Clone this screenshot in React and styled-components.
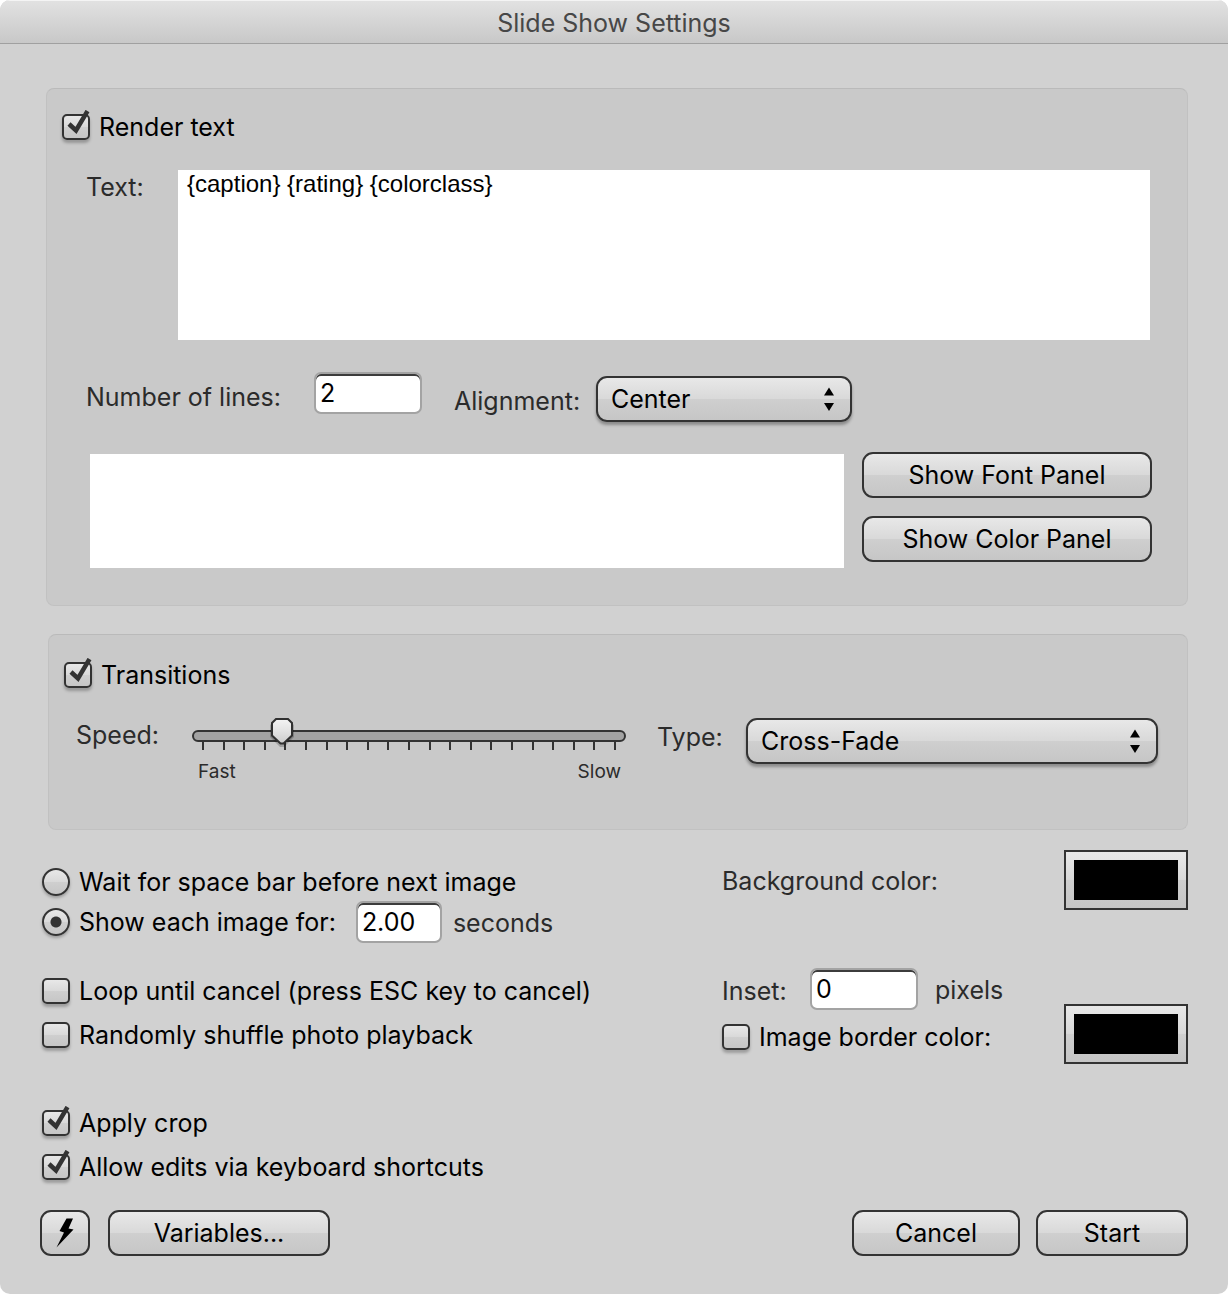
import { useState } from 'react';
import styled, { createGlobalStyle } from 'styled-components';

const GlobalStyle = createGlobalStyle`
    * {
        box-sizing: border-box;
    }
    body {
        margin: 0;
        background: #fff;
    }
    body, button, input, select {
        font-family: Inter, 'Liberation Sans', sans-serif;
        font-size: 25px;
        line-height: 32px;
        color: #000;
    }
`;

const glossy = 'linear-gradient(#e8e8e8 0%, #d9d9d9 49%, #cfcfcf 50%, #c6c6c6 100%)';

// pointed slider handle
const thumb = `url("data:image/svg+xml,%3Csvg xmlns='http://www.w3.org/2000/svg' width='26' height='32'%3E%3Cdefs%3E%3ClinearGradient id='g' x2='0' y2='1'%3E%3Cstop stop-color='%23f4f4f4'/%3E%3Cstop offset='.5' stop-color='%23e2e2e2'/%3E%3Cstop offset='1' stop-color='%23cccccc'/%3E%3C/linearGradient%3E%3C/defs%3E%3Cpath d='M5 3h16l4 4v12l-10 10h-4L1 19V7z' fill='%23000' opacity='.2'/%3E%3Cpath d='M7 1h12l4 4v12.500l-8.500 8h-3L3 17.500V5z' fill='url(%23g)' stroke='%23303030' stroke-width='2'/%3E%3C/svg%3E")`;

const Window = styled.form`
    display: flex;
    flex-direction: column;
    min-height: 100vh;
    background: #d1d1d1;
    border-radius: 10px;
    overflow: hidden;
`;

const TitleBar = styled.header`
    height: 44px;
    padding-top: 7px;
    text-align: center;
    color: #474747;
    background: linear-gradient(#e2e2e2, #c8c8c8);
    border-bottom: 1px solid #a0a0a0;
    box-shadow: inset 0 2px 0 -1px #f4f4f4;
`;

const Title = styled.h1`
    margin: 0;
    font-size: 25px;
    font-weight: 400;
    line-height: 32px;
`;

const Content = styled.main`
    display: flex;
    flex-direction: column;
    padding: 44px 40px 38px;
`;

const Panel = styled.section`
    margin-left: ${props => props.$indent}px;
    margin-bottom: ${props => props.$after}px;
    padding: ${props => props.$padding};
    background: #c9c9c9;
    border: 1px solid #c1c1c1;
    border-top-color: #bababa;
    border-radius: 8px;
`;

const Choice = styled.label`
    display: inline-flex;
    align-items: center;
    gap: 9px;
`;

const Mark = styled.span`
    position: relative;
    display: flex;
    flex: none;
    width: 28px;
`;

const Tick = styled.svg`
    display: none;
    position: absolute;
    left: 0;
    top: -4px;
    pointer-events: none;
`;

const CheckInput = styled.input`
    appearance: none;
    width: 28px;
    height: 26px;
    margin: 0;
    border: 2px solid #333;
    border-radius: 5px;
    background: ${glossy};
    box-shadow: 0 3px 3px rgba(0, 0, 0, 0.25);

    &:checked + ${Tick} {
        display: block;
    }
`;

const RadioInput = styled.input`
    appearance: none;
    width: 28px;
    height: 28px;
    margin: 0;
    border: 2px solid #333;
    border-radius: 50%;
    background: ${glossy};
    box-shadow: 0 2px 3px rgba(0, 0, 0, 0.25);

    &:checked {
        background: radial-gradient(circle, #333 5px, transparent 6px), ${glossy};
    }
`;

const FieldLabel = styled.label`
    color: #2b2b2b;
    white-space: nowrap;
    width: ${props => props.$width ? props.$width + 'px' : 'auto'};
    padding-top: ${props => props.$drop || 0}px;
`;

const Unit = styled.span`
    color: #2b2b2b;
    padding-top: 2px;
`;

const NumberInput = styled.input`
    width: ${props => props.$width}px;
    height: 42px;
    padding: 0 4px;
    border: 2px solid #a3a3a3;
    border-radius: 7px;
    background: #fff;
    box-shadow: inset 0 2px 0 #3c3c3c;
    outline: none;
`;

const TextRow = styled.div`
    display: flex;
    align-items: flex-start;
    margin-top: 27px;
    padding: 0 2px 0 24px;
`;

const CaptionText = styled.textarea`
    flex: 1;
    min-width: 0;
    height: 170px;
    padding: 0 9px;
    border: 0;
    resize: none;
    outline: none;
    background: #fff;
    color: #000;
    font: 24px/28px 'Liberation Sans', Arial, sans-serif;
`;

const LinesRow = styled.div`
    display: flex;
    align-items: flex-start;
    gap: 32px;
    margin-top: 32px;
    padding-left: 24px;
`;

const Field = styled.div`
    display: flex;
    align-items: center;
`;

const SelectWrap = styled.div`
    position: relative;
    flex: ${props => props.$grow || 'none'};
    width: ${props => props.$width ? props.$width + 'px' : 'auto'};
    min-width: 0;
    margin: 4px 0 2px;
`;

const SelectBox = styled.select`
    appearance: none;
    display: block;
    width: 100%;
    height: 46px;
    padding: 0 40px 0 13px;
    border: 2px solid #333;
    border-radius: 11px;
    background: ${glossy};
    box-shadow: 0 3px 3px rgba(0, 0, 0, 0.3);
`;

const Arrows = styled.svg`
    position: absolute;
    right: 18px;
    top: 11px;
    pointer-events: none;
`;

const PreviewRow = styled.div`
    display: flex;
    align-items: flex-end;
    gap: 18px;
    margin-top: 28px;
    padding-left: 28px;
`;

const Preview = styled.div`
    flex: 1;
    height: 114px;
    background: #fff;
`;

const ButtonStack = styled.div`
    display: grid;
    gap: 18px;
    width: 290px;
    padding-bottom: 6px;
`;

const PushButton = styled.button`
    display: flex;
    align-items: center;
    justify-content: center;
    width: ${props => props.$width ? props.$width + 'px' : '100%'};
    height: 46px;
    padding: 0;
    border: 2px solid #333;
    border-radius: 11px;
    background: ${glossy};
`;

const TransitionRow = styled.div`
    display: flex;
    align-items: flex-start;
    margin-top: 23px;
    padding-left: 12px;
`;

const Slider = styled.div`
    flex: 434;
    min-width: 0;
    padding-top: 6px;
    margin-right: 31px;
`;

const Range = styled.input`
    appearance: none;
    display: block;
    width: 100%;
    height: 32px;
    margin: 0;
    background: none;

    &::-webkit-slider-runnable-track {
        height: 12px;
        border: 2px solid #333;
        border-radius: 6px;
        background: #a3a3a3;
    }
    &::-webkit-slider-thumb {
        appearance: none;
        position: relative;
        width: 26px;
        height: 32px;
        margin-top: -14px;
        background: ${thumb} no-repeat;
    }
`;

const Ticks = styled.div`
    display: flex;
    justify-content: space-between;
    height: 8px;
    margin-top: -10px;
    padding: 0 10px;

    i {
        width: 2px;
        background: #333;
    }
`;

const Ends = styled.div`
    display: flex;
    justify-content: space-between;
    padding: 10px 5px 0 6px;
    font-size: 19px;
    line-height: 24px;
    color: #2b2b2b;
`;

const Options = styled.div`
    display: grid;
    grid-template-columns: minmax(0, 682fr) minmax(0, 466fr);
`;

const LeftColumn = styled.div`
    padding: 12px 0 0 2px;
`;

const OptionGroup = styled.div`
    margin-bottom: ${props => props.$after}px;
`;

const Option = styled.div`
    display: flex;
    align-items: center;
    height: ${props => props.$height}px;
    white-space: nowrap;
`;

const Timing = styled.div`
    display: flex;
    align-items: center;
    gap: 11px;
    margin-left: 20px;
`;

const ColorRow = styled.div`
    display: flex;
    align-items: center;
    justify-content: space-between;
    margin-bottom: 58px;
`;

const BorderBlock = styled.div`
    display: flex;
    align-items: flex-end;
    justify-content: space-between;
    height: 96px;
`;

const BorderFields = styled.div`
    display: flex;
    flex-direction: column;
    gap: 6px;
    align-self: flex-start;
    align-items: flex-start;
    white-space: nowrap;
`;

const Inset = styled.div`
    display: flex;
    align-items: center;
    gap: 17px;
`;

const ColorWell = styled.input`
    appearance: none;
    flex: none;
    width: 124px;
    height: 60px;
    padding: 8px;
    border: 2px solid #333;
    background: ${glossy};

    &::-webkit-color-swatch-wrapper {
        padding: 0;
    }
    &::-webkit-color-swatch {
        border: 0;
        border-radius: 0;
    }
`;

const Footer = styled.footer`
    display: flex;
    gap: 16px;
    margin-top: 21px;
`;

const FooterLeft = styled.div`
    display: flex;
    gap: 18px;
    margin-right: auto;
`;

function Check({ children, on }) {
    let [checked, setChecked] = useState(!!on);

    return (
        <Choice>
            <Mark>
                <CheckInput type="checkbox" checked={checked} onChange={e => setChecked(e.target.checked)} />
                <Tick width="30" height="28" viewBox="0 0 30 28" aria-hidden="true">
                    <path d="M7 14 L14 20.500 L25.500 1" fill="none" stroke="#333" strokeWidth="4.500" />
                </Tick>
            </Mark>
            {children}
        </Choice>
    )
}

function Radio({ children, ...rest }) {
    return (
        <Choice>
            <Mark>
                <RadioInput type="radio" name="advance" {...rest} />
            </Mark>
            {children}
        </Choice>
    )
}

function Popup({ id, options, ...rest }) {
    return (
        <SelectWrap {...rest}>
            <SelectBox id={id}>
                {options.map(name => <option key={name}>{name}</option>)}
            </SelectBox>
            <Arrows width="10" height="24" viewBox="0 0 10 24" aria-hidden="true">
                <path d="M5 0.500 L10 8.500 H0 Z M0 16 H10 L5 24 Z" fill="#000" />
            </Arrows>
        </SelectWrap>
    )
}

function App() {
    let [advance, setAdvance] = useState('timed');
    let [speed, setSpeed] = useState(37);

    return (
        <>
            <GlobalStyle />
            <Window onSubmit={e => e.preventDefault()}>
                <TitleBar>
                    <Title>Slide Show Settings</Title>
                </TitleBar>
                <Content>
                    <Panel $indent={6} $after={28} $padding="22px 35px 37px 15px">
                        <Option $height={32}><Check on>Render text</Check></Option>
                        <TextRow>
                            <FieldLabel htmlFor="caption" $width={92} $drop={1}>Text:</FieldLabel>
                            <CaptionText id="caption" defaultValue="{caption} {rating} {colorclass}" spellCheck={false} />
                        </TextRow>
                        <LinesRow>
                            <Field>
                                <FieldLabel htmlFor="lines" $width={228} $drop={8}>Number of lines:</FieldLabel>
                                <NumberInput id="lines" $width={108} defaultValue="2" />
                            </Field>
                            <Field>
                                <FieldLabel htmlFor="align" $width={142} $drop={6}>Alignment:</FieldLabel>
                                <Popup id="align" $width={256} options={['Center']} />
                            </Field>
                        </LinesRow>
                        <PreviewRow>
                            <Preview />
                            <ButtonStack>
                                <PushButton type="button">Show Font Panel</PushButton>
                                <PushButton type="button">Show Color Panel</PushButton>
                            </ButtonStack>
                        </PreviewRow>
                    </Panel>

                    <Panel $indent={8} $after={20} $padding="24px 29px 45px 15px">
                        <Option $height={32}><Check on>Transitions</Check></Option>
                        <TransitionRow>
                            <FieldLabel htmlFor="speed" $width={116} $drop={5}>Speed:</FieldLabel>
                            <Slider>
                                <Range id="speed" type="range" min="0" max="200" value={speed}
                                    onChange={e => setSpeed(e.target.value)} />
                                <Ticks>{[...Array(21)].map((_, i) => <i key={i} />)}</Ticks>
                                <Ends><span>Fast</span><span>Slow</span></Ends>
                            </Slider>
                            <FieldLabel htmlFor="type" $width={89} $drop={7}>Type:</FieldLabel>
                            <Popup id="type" $grow="412" options={['Cross-Fade']} />
                        </TransitionRow>
                    </Panel>

                    <Options>
                        <LeftColumn>
                            <OptionGroup $after={27}>
                                <Option $height={40}>
                                    <Radio checked={advance === 'space'} onChange={() => setAdvance('space')}>
                                        Wait for space bar before next image
                                    </Radio>
                                </Option>
                                <Option $height={40}>
                                    <Radio checked={advance === 'timed'} onChange={() => setAdvance('timed')}>
                                        Show each image for:
                                    </Radio>
                                    <Timing>
                                        <NumberInput aria-label="Seconds" $width={86} defaultValue="2.00" />
                                        <Unit>seconds</Unit>
                                    </Timing>
                                </Option>
                            </OptionGroup>
                            <OptionGroup $after={44}>
                                <Option $height={44}><Check>Loop until cancel (press ESC key to cancel)</Check></Option>
                                <Option $height={44}><Check>Randomly shuffle photo playback</Check></Option>
                            </OptionGroup>
                            <OptionGroup $after={0}>
                                <Option $height={44}><Check on>Apply crop</Check></Option>
                                <Option $height={44}><Check on>Allow edits via keyboard shortcuts</Check></Option>
                            </OptionGroup>
                        </LeftColumn>
                        <div>
                            <ColorRow>
                                <FieldLabel htmlFor="background" $drop={2}>Background color:</FieldLabel>
                                <ColorWell id="background" type="color" defaultValue="#000000" />
                            </ColorRow>
                            <BorderBlock>
                                <BorderFields>
                                    <Inset>
                                        <Field>
                                            <FieldLabel htmlFor="inset" $width={88} $drop={4}>Inset:</FieldLabel>
                                            <NumberInput id="inset" $width={108} defaultValue="0" />
                                        </Field>
                                        <Unit>pixels</Unit>
                                    </Inset>
                                    <Option $height={42}><Check>Image border color:</Check></Option>
                                </BorderFields>
                                <ColorWell aria-label="Image border color" type="color" defaultValue="#000000" />
                            </BorderBlock>
                        </div>
                    </Options>

                    <Footer>
                        <FooterLeft>
                            <PushButton type="button" $width={50} aria-label="Snapshots">
                                <svg width="18" height="30" viewBox="0 0 18 30" aria-hidden="true">
                                    <path d="M10.500 0.500 L17 0.500 L12.500 10.500 L17.500 11.500 L0.500 29.500 L8 14.500 L3.500 13 Z" fill="#000" />
                                </svg>
                            </PushButton>
                            <PushButton type="button" $width={222}>Variables...</PushButton>
                        </FooterLeft>
                        <PushButton type="button" $width={168}>Cancel</PushButton>
                        <PushButton type="submit" $width={152}>Start</PushButton>
                    </Footer>
                </Content>
            </Window>
        </>
    )
}

export default App
